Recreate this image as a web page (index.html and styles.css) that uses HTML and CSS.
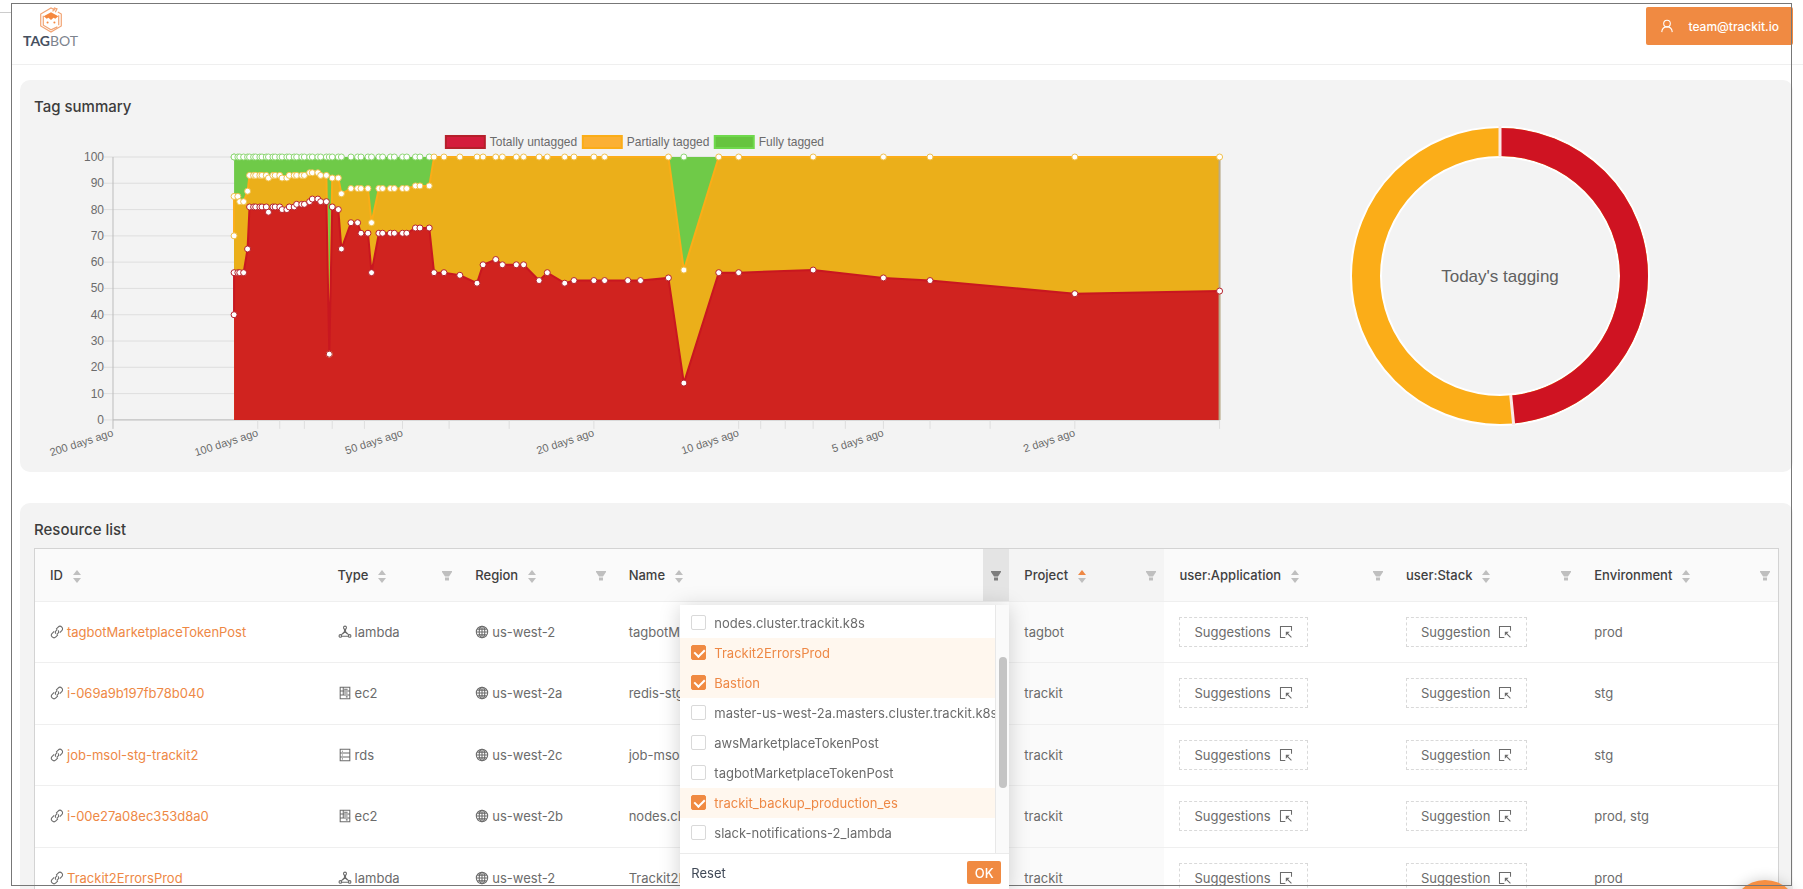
FILE: index.html
```html
<!DOCTYPE html>
<html lang="en">
<head>
    <meta charset="UTF-8">
    <meta name="viewport" content="width=device-width, initial-scale=1.0">
    <title>Tagbot</title>
    <link rel="stylesheet" href="styles.css">
</head>
<body>
    <!-- icons -->
    <svg class="sprite" aria-hidden="true">
        <symbol id="link" viewBox="0 0 16 16">
            <path d="M7 4.600l2.300-2.300a2.900 2.900 0 0 1 4.200 4.200l-2.300 2.300M9 11.400l-2.300 2.300a2.900 2.900 0 0 1-4.200-4.200l2.300-2.300M6.800 9.800a2.400 2.400 0 0 1 0-3.200l1.500-1.500M9.200 6.200a2.400 2.400 0 0 1 0 3.200l-1.500 1.500"/>
        </symbol>
        <symbol id="lambda" viewBox="0 0 16 16">
            <circle cx="8" cy="3" r="1.700"/><circle cx="2.700" cy="12.500" r="1.500"/><circle cx="13.300" cy="12.500" r="1.500"/>
            <path d="M7.400 4.700v3L3.800 11.300M8.600 4.700v3l3.600 3.600M4.300 12.800h7.400M5.400 10.200L8 7.800l2.600 2.400"/>
        </symbol>
        <symbol id="ec2" viewBox="0 0 16 16">
            <path d="M2.500 1.500h11v13h-11zM2.500 5.800h11M2.500 10.200h11M7 3.700h4M7 8h4M6 1.500v8.700M9 12.400h2"/>
        </symbol>
        <symbol id="rds" viewBox="0 0 16 16">
            <path d="M2.500 1.500h11v13h-11zM2.500 5.800h11M2.500 10.200h11M4.500 3.700h1M4.500 8h1M4.500 12.400h1"/>
        </symbol>
        <symbol id="globe" viewBox="0 0 16 16">
            <circle cx="8" cy="8" r="6.500"/><ellipse cx="8" cy="8" rx="3.200" ry="6.500"/>
            <path d="M1.500 8h13M8 1.500v13M2.600 4.700h10.800M2.600 11.300h10.800"/>
        </symbol>
        <symbol id="select" viewBox="0 0 16 16">
            <path d="M14.300 6.500V1.700H1.700v12.600h5.500M9 9l5.200 5.200"/>
            <path class="solid" d="M7.800 7.800h4.400l-4.400 4.400z"/>
        </symbol>
        <symbol id="filter" viewBox="0 0 12 12">
            <path d="M1 1h10v1L8 6.500H4L1 2zM4 7.500h4v3H4z"/>
        </symbol>
        <symbol id="user" viewBox="0 0 16 16">
            <circle cx="8" cy="5.200" r="3.800"/><path d="M2 15c.2-3.500 2.500-6 6-6s5.800 2.500 6 6"/>
        </symbol>
    </svg>

    <header class="header">
        <a class="logo" href="#">
            <svg viewBox="0 0 28 30" width="24" height="26" aria-hidden="true">
                <path class="hex" d="M19 3.500L14 1 2 8v14l12 7 12-7V8l-4-2.300"/>
                <path class="hex" d="M21.500 23L14 26.500 5 21V10M23 9.500V21M16 5l2-4 3 1-2 4"/>
                <path class="hair" d="M5.500 10.500L14 6l8.500 4.500-3.500 3-2-1-3 2.500-3-2.500-2 1z"/>
                <circle class="hair" cx="10" cy="18" r="1.200"/><circle class="hair" cx="18" cy="18" r="1.200"/>
            </svg>
            <span><b>TAG</b>BOT</span>
        </a>
        <button class="user"><svg class="icon"><use href="#user"/></svg>team@trackit.io</button>
    </header>

    <main>
        <section class="card">
            <h2>Tag summary</h2>
            <div class="charts">
                <svg id="area" class="area" viewBox="0 0 1187 342"></svg>
                <svg class="donut" viewBox="0 0 300 300">
                    <circle class="ring" cx="150" cy="150" r="134"/>
                    <circle class="part yellow" cx="150" cy="150" r="134" pathLength="100"/>
                    <circle class="part red" cx="150" cy="150" r="134" pathLength="100"/>
                    <path class="cut" d="M150 0v31M160.700 269l3 30"/>
                    <text x="150" y="156">Today's tagging</text>
                </svg>
            </div>
        </section>

        <section class="card">
            <h2>Resource list</h2>
            <div class="table">
                <table>
                    <colgroup>
                        <col class="c-id"><col class="c-type"><col class="c-region"><col class="c-name">
                        <col class="c-project"><col class="c-app"><col class="c-stack"><col class="c-env">
                    </colgroup>
                    <thead>
                        <tr>
                            <th>ID<i class="sort"></i></th>
                            <th>Type<i class="sort"></i><button class="filter" aria-label="Filter type"><svg><use href="#filter"/></svg></button></th>
                            <th>Region<i class="sort"></i><button class="filter" aria-label="Filter region"><svg><use href="#filter"/></svg></button></th>
                            <th>Name<i class="sort"></i><button class="filter open" aria-label="Filter name"><svg><use href="#filter"/></svg></button>
                                <div class="dropdown">
                                    <div class="scroll">
                                        <ul>
                                            <li><label><input type="checkbox">nodes.cluster.trackit.k8s</label></li>
                                            <li><label><input type="checkbox" checked>Trackit2ErrorsProd</label></li>
                                            <li><label><input type="checkbox" checked>Bastion</label></li>
                                            <li><label><input type="checkbox">master-us-west-2a.masters.cluster.trackit.k8s</label></li>
                                            <li><label><input type="checkbox">awsMarketplaceTokenPost</label></li>
                                            <li><label><input type="checkbox">tagbotMarketplaceTokenPost</label></li>
                                            <li><label><input type="checkbox" checked>trackit_backup_production_es</label></li>
                                            <li><label><input type="checkbox">slack-notifications-2_lambda</label></li>
                                        </ul>
                                        <div class="track"><div class="thumb"></div></div>
                                    </div>
                                    <div class="actions">
                                        <button class="reset">Reset</button>
                                        <button class="ok">OK</button>
                                    </div>
                                </div>
                            </th>
                            <th class="sorted">Project<i class="sort up"></i><button class="filter" aria-label="Filter project"><svg><use href="#filter"/></svg></button></th>
                            <th>user:Application<i class="sort"></i><button class="filter" aria-label="Filter application"><svg><use href="#filter"/></svg></button></th>
                            <th>user:Stack<i class="sort"></i><button class="filter" aria-label="Filter stack"><svg><use href="#filter"/></svg></button></th>
                            <th>Environment<i class="sort"></i><button class="filter" aria-label="Filter environment"><svg><use href="#filter"/></svg></button></th>
                        </tr>
                    </thead>
                    <tbody>
                        <tr>
                            <td><svg class="icon"><use href="#link"/></svg><a href="#">tagbotMarketplaceTokenPost</a></td>
                            <td><svg class="icon"><use href="#lambda"/></svg>lambda</td>
                            <td><svg class="icon"><use href="#globe"/></svg>us-west-2</td>
                            <td>tagbotMarketplaceTokenPost</td>
                            <td class="sorted">tagbot</td>
                            <td><button class="suggest">Suggestions<svg class="icon"><use href="#select"/></svg></button></td>
                            <td><button class="suggest">Suggestion<svg class="icon"><use href="#select"/></svg></button></td>
                            <td>prod</td>
                        </tr>
                        <tr>
                            <td><svg class="icon"><use href="#link"/></svg><a href="#">i-069a9b197fb78b040</a></td>
                            <td><svg class="icon"><use href="#ec2"/></svg>ec2</td>
                            <td><svg class="icon"><use href="#globe"/></svg>us-west-2a</td>
                            <td>redis-stg</td>
                            <td class="sorted">trackit</td>
                            <td><button class="suggest">Suggestions<svg class="icon"><use href="#select"/></svg></button></td>
                            <td><button class="suggest">Suggestion<svg class="icon"><use href="#select"/></svg></button></td>
                            <td>stg</td>
                        </tr>
                        <tr>
                            <td><svg class="icon"><use href="#link"/></svg><a href="#">job-msol-stg-trackit2</a></td>
                            <td><svg class="icon"><use href="#rds"/></svg>rds</td>
                            <td><svg class="icon"><use href="#globe"/></svg>us-west-2c</td>
                            <td>job-msol-stg-trackit2</td>
                            <td class="sorted">trackit</td>
                            <td><button class="suggest">Suggestions<svg class="icon"><use href="#select"/></svg></button></td>
                            <td><button class="suggest">Suggestion<svg class="icon"><use href="#select"/></svg></button></td>
                            <td>stg</td>
                        </tr>
                        <tr>
                            <td><svg class="icon"><use href="#link"/></svg><a href="#">i-00e27a08ec353d8a0</a></td>
                            <td><svg class="icon"><use href="#ec2"/></svg>ec2</td>
                            <td><svg class="icon"><use href="#globe"/></svg>us-west-2b</td>
                            <td>nodes.cluster.trackit.k8s</td>
                            <td class="sorted">trackit</td>
                            <td><button class="suggest">Suggestions<svg class="icon"><use href="#select"/></svg></button></td>
                            <td><button class="suggest">Suggestion<svg class="icon"><use href="#select"/></svg></button></td>
                            <td>prod, stg</td>
                        </tr>
                        <tr>
                            <td><svg class="icon"><use href="#link"/></svg><a href="#">Trackit2ErrorsProd</a></td>
                            <td><svg class="icon"><use href="#lambda"/></svg>lambda</td>
                            <td><svg class="icon"><use href="#globe"/></svg>us-west-2</td>
                            <td>Trackit2ErrorsProd</td>
                            <td class="sorted">trackit</td>
                            <td><button class="suggest">Suggestions<svg class="icon"><use href="#select"/></svg></button></td>
                            <td><button class="suggest">Suggestion<svg class="icon"><use href="#select"/></svg></button></td>
                            <td>prod</td>
                        </tr>
                    </tbody>
                </table>
            </div>
        </section>
    </main>

    <button class="fab" aria-label="Help"></button>
    <div class="frame"></div>

    <script src="chart.js"></script>
</body>
</html>
```
FILE: styles.css
```css
* {
    box-sizing: border-box;
    margin: 0;
    padding: 0;
}
html, body {
    height: 100%;
    overflow: hidden;
}
body {
    font-family: Inter, "Liberation Sans", sans-serif;
    font-size: 13px;
    color: #6b6b6b;
    background: #fff;
}
button {
    font: inherit;
    color: inherit;
    border: 0;
    background: none;
    cursor: pointer;
}
a {
    color: #ee8845;
    text-decoration: none;
}
.sprite {
    position: absolute;
    width: 0;
    height: 0;
}
.icon {
    width: 14px;
    height: 14px;
    fill: none;
    stroke: currentColor;
    stroke-width: 1.2;
    vertical-align: -2px;
}
.solid {
    fill: currentColor;
    stroke: none;
}
/* thin outline around the whole window */
.frame {
    position: fixed;
    top: 3px;
    right: 11px;
    bottom: 3px;
    left: 11px;
    border: 1px solid #777;
    pointer-events: none;
}
body::before {
    content: "";
    position: absolute;
    top: 12px;
    left: 0;
    width: 11px;
    height: 1px;
    background: #ccc;
}

/* header */
.header {
    display: flex;
    justify-content: space-between;
    align-items: flex-start;
    height: 65px;
    margin-left: 12px;
    padding: 7px 10px 0 11px;
    border-bottom: 1px solid #efefef;
}
.logo {
    display: flex;
    flex-direction: column;
    align-items: center;
    font-family: Lato, sans-serif;
    font-size: 14px;
    line-height: 16px;
    color: #7d848e;
}
.logo b {
    color: #46505f;
}
.hex {
    fill: none;
    stroke: #f2a474;
    stroke-width: 1.4;
}
.hair {
    fill: #f5883f;
}
.user {
    display: flex;
    align-items: center;
    gap: 14px;
    height: 38px;
    padding: 0 14px;
    font-size: 12px;
    font-weight: 500;
    color: #fff;
    background: #f08a42;
    border-radius: 2px;
}

/* cards */
main {
    padding: 15px 10px 0 20px;
}
.card {
    margin-bottom: 31px;
    padding: 14px 14px 10px;
    background: #f3f3f3;
    border-radius: 10px;
}
h2 {
    font-size: 15px;
    font-weight: 500;
    line-height: 26px;
    color: #3c3c3c;
}
.charts {
    display: grid;
    grid-template-columns: 68% 32%;
    align-items: start;
}
.area {
    width: 100%;
    overflow: visible;
    font-family: "Liberation Sans", sans-serif;
    font-size: 12px;
    fill: #6b6b6b;
}
.donut {
    width: 300px;
    height: 300px;
    margin: 6px auto 0;
    font-family: "Liberation Sans", sans-serif;
    font-size: 17px;
    text-anchor: middle;
    fill: #606060;
}
.ring {
    fill: none;
    stroke: #fff;
    stroke-width: 32;
}
.part {
    fill: none;
    stroke-width: 28;
    transform: rotate(-90deg);
    transform-origin: center;
}
.part.yellow { stroke: #fbad18; }
.part.red { stroke: #cf1322; stroke-dasharray: 48.6 51.4; }
.cut {
    stroke: #fbe9e6;
    stroke-width: 3;
}

/* area chart */
.fill-red { fill: #d0231f; }
.fill-yellow { fill: #ebaf1a; }
.fill-green { fill: #6fca48; }
.line { fill: none; stroke-width: 2; }
.line-red { stroke: #c81720; }
.line-yellow { stroke: #fbad18; }
.dot { fill: #fff; }
.dot-red { stroke: #b5202b; }
.dot-yellow { stroke: #f0c04a; }
.dot-green { stroke: #8ed673; }
.grid { stroke: #dedede; }
.axis { stroke: #bdbdbd; }
.edge { stroke: #b9ab8a; stroke-width: 2; }
.end { text-anchor: end; }
.day { font-size: 11px; }

/* table */
.table {
    margin-top: 5px;
    border: 1px solid #d3d3d3;
}
table {
    width: 100%;
    table-layout: fixed;
    border-spacing: 0;
    background: #fff;
}
.c-id { width: 16.5%; }
.c-type { width: 7.9%; }
.c-region { width: 8.8%; }
.c-name { width: 22.7%; }
.c-project { width: 8.9%; }
.c-app { width: 13%; }
.c-stack { width: 10.8%; }
.c-env { width: 11.4%; }
th, td {
    padding: 0 15px;
    text-align: left;
    white-space: nowrap;
    border-bottom: 1px solid #efefef;
}
th {
    position: relative;
    height: 53px;
    font-weight: 500;
    color: #3f3f3f;
    background: #fafafa;
}
td {
    height: 61px;
}
tr:nth-child(even) td {
    height: 62px;
}
td > .icon {
    margin-right: 3px;
}
th.sorted { background: #f4f4f4; }
td.sorted { background: #fafafa; }
.sort {
    display: inline-flex;
    flex-direction: column;
    gap: 3px;
    margin-left: 10px;
    vertical-align: middle;
}
.sort::before,
.sort::after {
    content: "";
    border: 4px solid transparent;
}
.sort::before {
    border-top: 0;
    border-bottom: 5px solid #bfbfbf;
}
.sort::after {
    border-bottom: 0;
    border-top: 5px solid #bfbfbf;
}
.sort.up::before { border-bottom-color: #ee8845; }
.filter {
    position: absolute;
    top: 0;
    right: 0;
    width: 26px;
    height: 52px;
}
.filter svg {
    width: 12px;
    height: 12px;
    fill: #bfbfbf;
    vertical-align: middle;
}
.filter.open { background: #e4e4e4; }
.filter.open svg { fill: #7d7d7d; }
.suggest {
    height: 30px;
    padding: 0 14px;
    border: 1px dashed #d9d9d9;
}
.suggest .icon {
    margin-left: 8px;
}

/* filter menu */
.dropdown {
    position: absolute;
    z-index: 1;
    top: 56px;
    right: 0;
    width: 329px;
    font-weight: 400;
    color: #6b6b6b;
    background: #fff;
    box-shadow: 0 2px 20px rgba(0, 0, 0, .18);
}
.scroll {
    display: flex;
    height: 249px;
    border-bottom: 1px solid #ebebeb;
}
.scroll ul {
    flex: 1;
    padding-top: 3px;
    overflow: hidden;
    list-style: none;
}
.scroll label {
    display: flex;
    align-items: center;
    gap: 8px;
    height: 30px;
    padding-left: 11px;
}
.scroll label:has(:checked) {
    color: #ee8845;
    background: #fff7ee;
}
.scroll input {
    appearance: none;
    flex: none;
    width: 15px;
    height: 15px;
    border: 1px solid #d9d9d9;
    border-radius: 2px;
    background: #fff;
}
.scroll input:checked {
    border-color: #f08a42;
    background: #f08a42;
}
.scroll input:checked::after {
    content: "";
    display: block;
    width: 5px;
    height: 8px;
    margin: 1px 0 0 4px;
    border: solid #fff;
    border-width: 0 2px 2px 0;
    transform: rotate(45deg);
}
.track {
    width: 14px;
    padding: 52px 3px 0;
    background: #fafafa;
    border-left: 1px solid #e8e8e8;
}
.thumb {
    width: 8px;
    height: 131px;
    border-radius: 4px;
    background: #c4c4c4;
}
.actions {
    display: flex;
    justify-content: space-between;
    align-items: center;
    height: 38px;
    padding: 0 8px 0 11px;
}
.reset {
    color: #3f4856;
}
.ok {
    width: 34px;
    height: 23px;
    font-weight: 500;
    color: #fff;
    background: #f08a42;
    border-radius: 2px;
}
.fab {
    position: fixed;
    right: 4px;
    bottom: -59px;
    width: 68px;
    height: 68px;
    border-radius: 50%;
    background: #f68f43;
    box-shadow: 0 0 14px rgba(0, 0, 0, .2);
}
```
FILE: chart.js
```js
// [days ago, totally untagged, untagged + partially tagged]
var data = [
    [112, 40, 70], [112, 56, 85], [110, 56, 85], [109, 56, 83], [107, 56, 83], [105, 65, 87],
    [104, 81, 93], [102, 81, 93], [101, 81, 93], [99, 81, 93], [98, 81, 93], [96, 81, 93],
    [95, 79, 92], [93, 81, 93], [92, 81, 93], [90, 81, 93], [89, 80, 92], [87, 80, 92],
    [86, 81, 93], [84, 81, 93], [83, 82, 93], [81, 82, 93], [80, 82, 93], [78, 83, 94],
    [77, 84, 94], [75, 84, 94], [74, 83, 93], [72, 83, 93], [71, 25, 25], [70, 81, 92],
    [68, 80, 92], [67, 65, 86], [64, 75, 88], [62, 75, 88], [61, 71, 88], [59, 71, 88],
    [58, 56, 75], [56, 71, 88], [55, 71, 88], [53, 71, 88], [52, 71, 88], [50, 71, 88],
    [49, 71, 88], [47, 73, 89], [46, 73, 89], [44, 73, 89], [43, 56, 100], [41, 56, 100],
    [38, 55, 100], [35, 52, 100], [34, 59, 100], [32, 61, 100], [31, 59, 100], [29, 59, 100],
    [28, 59, 100], [26, 53, 100], [25, 56, 100], [23, 52, 100], [22, 53, 100], [20, 53, 100],
    [19, 53, 100], [17, 53, null], [16, 53, null], [14, 54, 100], [13, 14, 57], [11, 56, 100],
    [10, 56, 100], [7, 57, 100], [5, 54, 100], [4, 53, 100], [2, 48, 100], [1, 49, 100]
];
var left = 79, right = 1186, top0 = 37, bottom = 300;
var out = '';

// logarithmic time axis
function px(day) {
    return right - (right - left) * Math.log(day) / Math.log(200);
}
function py(value) {
    return bottom - (bottom - top0) * value / 100;
}
function line(x1, y1, x2, y2, cls) {
    out += '<line class="' + cls + '" x1="' + x1 + '" y1="' + y1 + '" x2="' + x2 + '" y2="' + y2 + '"/>';
}
function points(col) {
    return data.filter(function (d) {
        return d[col] !== null;
    }).map(function (d) {
        return px(d[0]).toFixed(1) + ',' + py(d[col]).toFixed(1);
    }).join(' ');
}
function dot(day, value, color) {
    out += '<circle class="dot dot-' + color + '" cx="' + px(day) + '" cy="' + py(value) + '" r="3"/>';
}

// grid and labels
for (var v = 0; v <= 100; v += 10) {
    line(70, py(v), right, py(v), 'grid');
    out += '<text class="end" x="70" y="' + (py(v) + 4) + '">' + v + '</text>';
}
line(left, top0, left, bottom + 9, 'axis');
line(left, bottom, right, bottom, 'axis');
[100, 90, 80, 70, 60, 50, 40, 30, 20, 10, 9, 8, 7, 6, 5, 4, 3, 2, 1].forEach(function (d) {
    line(px(d), bottom, px(d), bottom + 9, 'grid');
});
[200, 100, 50, 20, 10, 5, 2].forEach(function (d) {
    out += '<text class="end day" transform="translate(' + (px(d) + 1) + ' 316) rotate(-18)">' + d + ' days ago</text>';
});

// areas
var start = px(112), base = ' ' + right + ',' + bottom + ' ' + start + ',' + bottom;
out += '<rect class="fill-green" x="' + start + '" y="' + top0 + '" width="' + (right - start) + '" height="' + (bottom - top0) + '"/>';
out += '<polygon class="fill-yellow" points="' + points(2) + base + '"/>';
out += '<polyline class="line line-yellow" points="' + points(2) + '"/>';
out += '<polygon class="fill-red" points="' + points(1) + base + '"/>';
out += '<polyline class="line line-red" points="' + points(1) + '"/>';
line(right, top0, right, bottom, 'edge');
data.forEach(function (d) {
    if (d[2] !== null) {
        if (d[2] < 100) {
            dot(d[0], 100, 'green');
        }
        dot(d[0], d[2], 'yellow');
    }
    dot(d[0], d[1], 'red');
});

// legend
[['Totally untagged', 412, '#d41c3c', '#b5202b'], ['Partially tagged', 549, '#fbb034', '#fbad18'], ['Fully tagged', 681, '#66c43f', '#6fd94c']].forEach(function (l) {
    out += '<rect x="' + l[1] + '" y="16" width="39" height="12" fill="' + l[2] + '" stroke="' + l[3] + '" stroke-width="2"/>';
    out += '<text x="' + (l[1] + 44) + '" y="26">' + l[0] + '</text>';
});

document.getElementById('area').innerHTML = out;
```
